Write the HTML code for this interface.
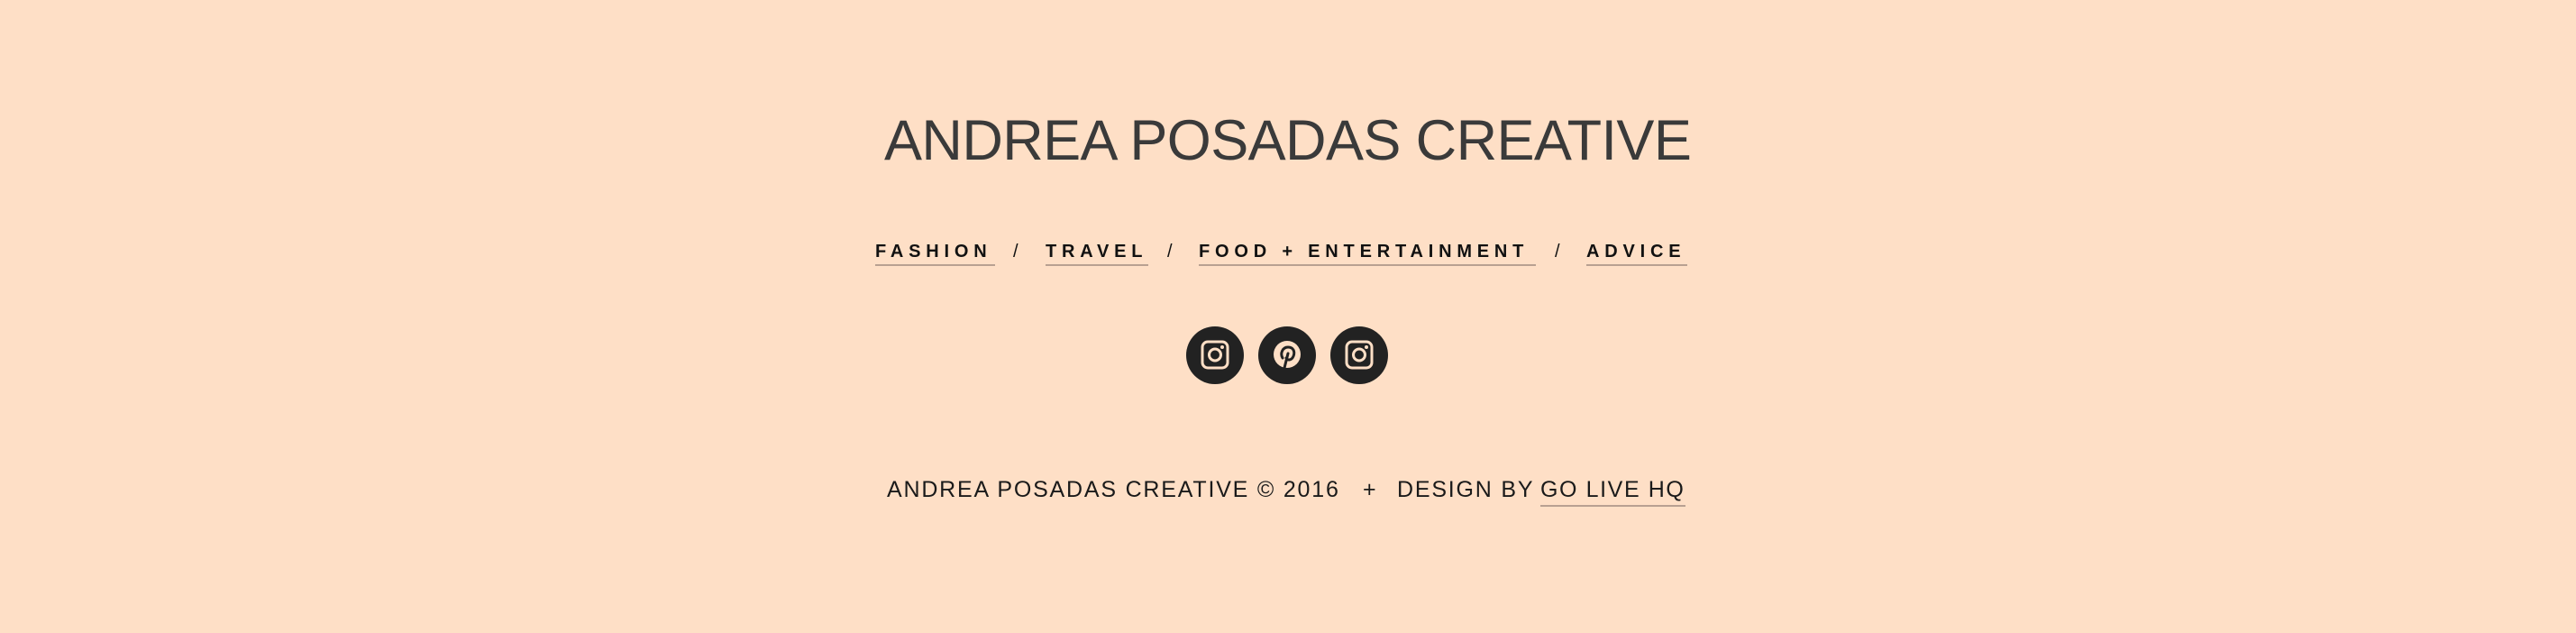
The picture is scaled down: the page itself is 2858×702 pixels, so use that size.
<!DOCTYPE html>
<html><head><meta charset="utf-8"><style>
html,body{margin:0;padding:0}
body{width:2858px;height:702px;background:#fedfc6;position:relative;overflow:hidden;color:#222;font-family:"Liberation Sans",sans-serif}
.a{position:absolute;white-space:nowrap}
#title{left:981px;top:120px;font-size:63px;letter-spacing:-0.6px;font-weight:normal;color:#3a3a3a}
.nav{top:268px;font-size:20px;font-weight:bold;letter-spacing:5.8px;color:#111}
.u{border-bottom:2px solid #b8a091;padding-bottom:2px}
.sl{top:268px;font-size:20px;color:#111}
.foot{top:529px;font-size:25px;letter-spacing:1.8px;color:#1a1a1a}
.c{position:absolute;top:362px;width:64px;height:64px;border-radius:50%;background:#222}
</style></head><body>
<div class="a" id="title">ANDREA POSADAS CREATIVE</div>

<div class="a nav u" style="left:971px;width:133px">FASHION</div>
<div class="a sl" style="left:1124px">/</div>
<div class="a nav u" style="left:1160px;width:114px">TRAVEL</div>
<div class="a sl" style="left:1295px">/</div>
<div class="a nav u" style="left:1330px;width:374px">FOOD + ENTERTAINMENT</div>
<div class="a sl" style="left:1725px">/</div>
<div class="a nav u" style="left:1760px;width:112px">ADVICE</div>

<div class="c" style="left:1316px"><svg width="64" height="64" viewBox="0 0 64 64"><rect x="18" y="17" width="28" height="29" rx="6" fill="none" stroke="#fedfc6" stroke-width="3"/><circle cx="32" cy="31.5" r="6.5" fill="none" stroke="#fedfc6" stroke-width="3"/><circle cx="40" cy="23" r="2" fill="#fedfc6"/></svg></div>
<div class="c" style="left:1396px"><svg width="64" height="64" viewBox="0 0 64 64"><circle cx="32" cy="31" r="15" fill="#fedfc6"/><path d="M29 46 L33 30 M27 35 C24 30 27 23 33 23 C39 23 41 28 39 33 C37 38 32 38 31 35" fill="none" stroke="#222" stroke-width="3" stroke-linecap="round"/></svg></div>
<div class="c" style="left:1476px"><svg width="64" height="64" viewBox="0 0 64 64"><rect x="18" y="17" width="28" height="29" rx="6" fill="none" stroke="#fedfc6" stroke-width="3"/><circle cx="32" cy="31.5" r="6.5" fill="none" stroke="#fedfc6" stroke-width="3"/><circle cx="40" cy="23" r="2" fill="#fedfc6"/></svg></div>

<div class="a foot" style="left:984px">ANDREA POSADAS CREATIVE © 2016</div>
<div class="a foot" style="left:1512px">+</div>
<div class="a foot" style="left:1550px">DESIGN BY</div>
<div class="a foot u" style="left:1709px;width:161px;letter-spacing:1.6px;padding-bottom:2px">GO LIVE HQ</div>
</body></html>
